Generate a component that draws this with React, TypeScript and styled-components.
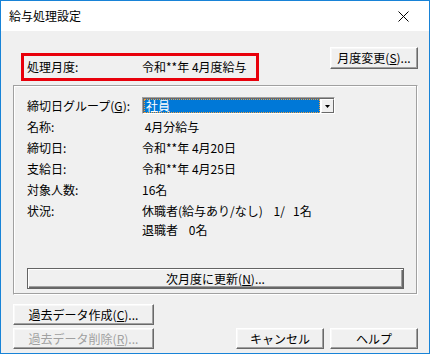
import React from "react";
import styled, { createGlobalStyle } from "styled-components";

const GlobalStyle = createGlobalStyle`
  html, body {
    margin: 0;
    padding: 0;
    background: #ffffff;
  }
  body {
    font-family: "Noto Sans CJK JP", "Noto Sans", sans-serif;
    font-size: 12px;
    color: #000000;
  }
`;

const Window = styled.div`
  width: 430px;
  height: 354px;
  box-sizing: border-box;
  border: 1px solid #1883d7;
  display: flex;
  flex-direction: column;
  background: #f0f0f0;
`;

const TitleBar = styled.div`
  height: 30px;
  background: #ffffff;
  display: flex;
  align-items: center;
  justify-content: space-between;
  padding: 0 20px 0 8px;
  flex-shrink: 0;
`;

const Title = styled.span`
  font-size: 12px;
  line-height: 1;
  margin-top: -1px;
`;

const Body = styled.div`
  flex: 1;
  display: flex;
  flex-direction: column;
  padding: 16px 11px 0 12px;
`;

const TopRow = styled.div`
  display: flex;
  justify-content: space-between;
  align-items: flex-start;
`;

const RedBox = styled.div`
  margin: 6px 0 0 8px;
  width: 238px;
  height: 28px;
  box-sizing: border-box;
  border: 3px solid #e8000b;
  display: flex;
  align-items: center;
  padding-left: 3px;
`;

const Label = styled.span<{ $w?: number }>`
  width: ${(p) => p.$w ?? 115}px;
  flex-shrink: 0;
  line-height: 1;
`;

const Value = styled.span`
  line-height: 1;
  white-space: pre;
`;

const Button = styled.button<{ $w: number; $h?: number; $disabled?: boolean; $default?: boolean }>`
  width: ${(p) => p.$w}px;
  height: ${(p) => p.$h ?? 21}px;
  box-sizing: border-box;
  padding: 0;
  margin: 0;
  font-family: inherit;
  font-size: 12px;
  line-height: 1;
  background: #f0f0f0;
  color: ${(p) => (p.$disabled ? "#a0a0a0" : "#000000")};
  border: 1px solid;
  border-color: ${(p) =>
    p.$default ? "#646464" : "#ffffff #696969 #696969 #ffffff"};
  box-shadow: ${(p) =>
    p.$default
      ? "inset 1px 1px #ffffff, inset -1px -1px #696969, inset -2px -2px #a0a0a0"
      : "inset -1px -1px #a0a0a0, inset 1px 1px #f8f8f8"};
  display: flex;
  align-items: center;
  justify-content: center;
  flex-shrink: 0;
`;

const Mnemonic = styled.span`
  text-decoration: underline;
`;

const GroupBox = styled.div`
  margin-top: 4px;
  width: 405px;
  box-sizing: border-box;
  border: 1px solid;
  border-color: #a0a0a0 #ffffff #ffffff #a0a0a0;
  box-shadow: inset -1px -1px #a0a0a0, inset 1px 1px #ffffff;
  padding: 9px 13px 5px 13px;
  display: flex;
  flex-direction: column;
`;

const Row = styled.div<{ $h?: number }>`
  height: ${(p) => p.$h ?? 21}px;
  display: flex;
  align-items: center;
`;

const Combo = styled.div`
  width: 193px;
  height: 17px;
  box-sizing: border-box;
  border: 1px solid;
  border-color: #a0a0a0 #ffffff #ffffff #a0a0a0;
  box-shadow: inset 1px 1px #696969;
  padding: 1px 0 0 1px;
  display: flex;
  background: #ffffff;
`;

const ComboValue = styled.div`
  flex: 1;
  background: #0078d7;
  color: #ffffff;
  border: 1px dotted #f0a040;
  box-sizing: border-box;
  display: flex;
  align-items: center;
  padding-left: 1px;
  line-height: 1;
  overflow: visible;
`;

const ComboArrow = styled.div`
  width: 13px;
  margin-left: 1px;
  box-sizing: border-box;
  border: 1px solid;
  border-color: #ffffff #696969 #696969 #ffffff;
  background: #f0f0f0;
  display: flex;
  align-items: center;
  justify-content: center;
`;

const Spacer = styled.div<{ $h: number }>`
  height: ${(p) => p.$h}px;
`;

const Indent = styled.div`
  margin-left: 115px;
`;

const BottomRow = styled.div`
  margin-top: 9px;
  display: flex;
  justify-content: space-between;
  align-items: flex-end;
`;

const ButtonStack = styled.div`
  display: flex;
  flex-direction: column;
  gap: 3px;
`;

const ButtonGroup = styled.div`
  display: flex;
  gap: 6px;
`;

const CloseIcon = () => (
  <svg width="11" height="11" viewBox="0 0 11 11">
    <path d="M0.5 0.5 L10.5 10.5 M10.5 0.5 L0.5 10.5" stroke="#000" strokeWidth="1" />
  </svg>
);

const ArrowIcon = () => (
  <svg width="5" height="3" viewBox="0 0 5 3">
    <path d="M0 0 H5 L2.5 3 Z" fill="#000" />
  </svg>
);

export default function App() {
  return (
    <>
      <GlobalStyle />
      <Window>
        <TitleBar>
          <Title>給与処理設定</Title>
          <CloseIcon />
        </TitleBar>
        <Body>
          <TopRow>
            <RedBox>
              <Label $w={115}>処理月度:</Label>
              <Value>令和**年 4月度給与</Value>
            </RedBox>
            <Button $w={88} $h={22}>
              月度変更(<Mnemonic>S</Mnemonic>)...
            </Button>
          </TopRow>
          <GroupBox>
            <Row>
              <Label>
                締切日グループ(<Mnemonic>G</Mnemonic>):
              </Label>
              <Combo>
                <ComboValue>社員</ComboValue>
                <ComboArrow>
                  <ArrowIcon />
                </ComboArrow>
              </Combo>
            </Row>
            <Row>
              <Label>名称:</Label>
              <Value> 4月分給与</Value>
            </Row>
            <Row>
              <Label>締切日:</Label>
              <Value>令和**年 4月20日</Value>
            </Row>
            <Row>
              <Label>支給日:</Label>
              <Value>令和**年 4月25日</Value>
            </Row>
            <Row>
              <Label>対象人数:</Label>
              <Value>16名</Value>
            </Row>
            <Row>
              <Label>状況:</Label>
              <Value>休職者(給与あり/なし)    1/   1名</Value>
            </Row>
            <Row $h={17}>
              <Indent>
                <Value>退職者    0名</Value>
              </Indent>
            </Row>
            <Spacer $h={30} />
            <Button $w={377} $default>
              次月度に更新(<Mnemonic>N</Mnemonic>)...
            </Button>
          </GroupBox>
          <BottomRow>
            <ButtonStack>
              <Button $w={141}>
                過去データ作成(<Mnemonic>C</Mnemonic>)...
              </Button>
              <Button $w={141} $disabled>
                過去データ削除(<Mnemonic>R</Mnemonic>)...
              </Button>
            </ButtonStack>
            <ButtonGroup>
              <Button $w={88}>キャンセル</Button>
              <Button $w={88}>ヘルプ</Button>
            </ButtonGroup>
          </BottomRow>
        </Body>
      </Window>
    </>
  );
}
